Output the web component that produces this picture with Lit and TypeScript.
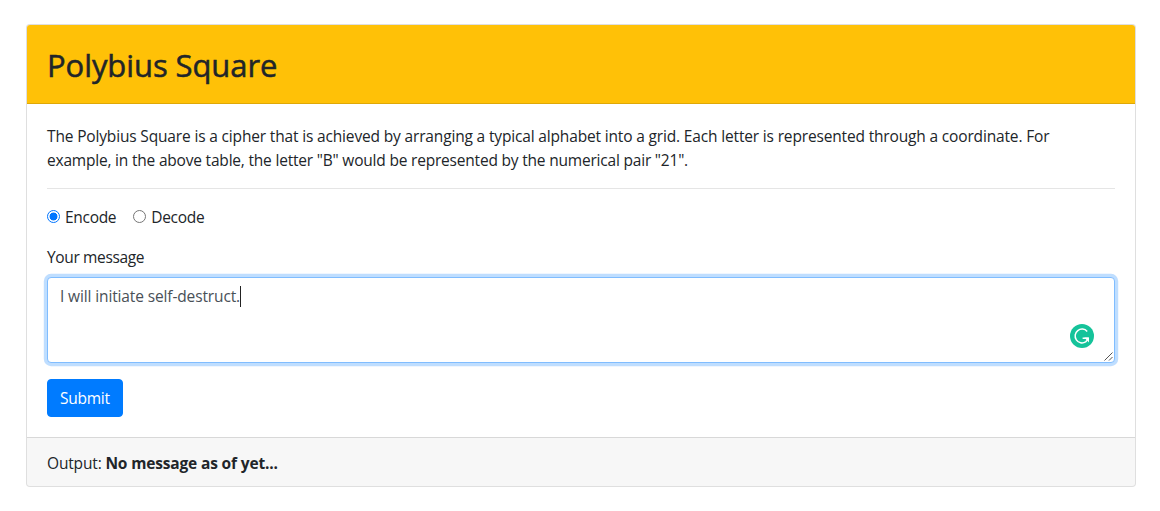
import { LitElement, html, css } from 'lit';
import { customElement, state } from 'lit/decorators.js';

@customElement('message-box')
export class MessageBox extends LitElement {
  static styles = css`
    :host {
      display: block;
    }

    .box {
      position: relative;
      box-sizing: border-box;
      height: 86px;
      padding: 6px 12px;
      border: 1px solid #80bdff;
      border-radius: 4px;
      background: #fff;
      box-shadow: 0 0 0 3.2px rgba(0, 123, 255, 0.25);
      color: #495057;
    }

    .line {
      display: flex;
      align-items: center;
      height: 24px;
      letter-spacing: -0.13px;
    }

    .caret {
      width: 1px;
      height: 21px;
      background: #222;
    }

    .badge {
      position: absolute;
      right: 20px;
      bottom: 14px;
      width: 24px;
      height: 24px;
    }

    .grip {
      position: absolute;
      right: 1px;
      bottom: 1px;
      width: 9px;
      height: 9px;
    }
  `;

  render() {
    return html`
      <div class="box">
        <div class="line"><span>I will initiate self-destruct.</span><span class="caret"></span></div>
        <svg class="badge" viewBox="0 0 24 24">
          <circle cx="12" cy="12" r="12" fill="#15c39a" />
          <path
            d="M17.2 7.4A6.9 6.9 0 1 0 15.6 17.9Q17.3 16.6 17.8 14.2H12.6"
            fill="none"
            stroke="#fff"
            stroke-width="1.5"
          />
          <path d="M14.2 13.5H19V18.4L17.4 16.7Z" fill="#fff" />
        </svg>
        <svg class="grip" viewBox="0 0 9 9">
          <path d="M0.5 8.5L8.5 0.5M5 8.5L8.5 5" stroke="#555" stroke-width="1" />
        </svg>
      </div>
    `;
  }
}

@customElement('app-root')
export class AppRoot extends LitElement {
  static styles = css`
    :host {
      display: block;
      padding: 24px 24px 0 26px;
      color: #212529;
      font-family: 'Open Sans', 'Noto Sans', sans-serif;
      font-size: 15.5px;
      line-height: 24px;
      letter-spacing: -0.16px;
    }

    .card {
      border: 1px solid rgba(0, 0, 0, 0.125);
      border-radius: 4px;
      background: #fff;
    }

    .header {
      padding: 21px 20px 19px;
      border-bottom: 1px solid rgba(0, 0, 0, 0.125);
      border-radius: 3px 3px 0 0;
      background: #ffc107;
    }

    h2 {
      margin: 0;
      font-size: 31px;
      font-weight: 500;
      line-height: 38.4px;
      letter-spacing: -0.08px;
      -webkit-text-stroke: 0.5px #212529;
    }

    .body {
      padding: 20px;
    }

    p {
      margin: 0;
    }

    .example {
      letter-spacing: -0.2px;
    }

    hr {
      margin: 16px 0;
      border: 0;
      border-top: 1px solid rgba(0, 0, 0, 0.1);
    }

    .modes {
      display: flex;
      gap: 17px;
      margin-bottom: 16px;
      letter-spacing: -0.3px;
    }

    .mode {
      display: flex;
      gap: 5px;
    }

    .radio {
      box-sizing: border-box;
      width: 13px;
      height: 13px;
      margin-top: 5px;
      border: 1px solid #767676;
      border-radius: 50%;
      background: #fff;
    }

    .radio.checked {
      border-color: #0075ff;
      background: radial-gradient(circle, #0075ff 3.6px, #fff 4.3px);
    }

    .label {
      margin-bottom: 8px;
      letter-spacing: -0.36px;
    }

    button {
      display: block;
      height: 38px;
      margin-top: 16px;
      padding: 6px 12px;
      border: 1px solid #007bff;
      border-radius: 4px;
      background: #007bff;
      color: #fff;
      font: inherit;
      letter-spacing: -0.25px;
    }

    .footer {
      padding: 13px 20px 11px;
      border-top: 1px solid rgba(0, 0, 0, 0.125);
      border-radius: 0 0 3px 3px;
      background: rgba(0, 0, 0, 0.03);
    }
  `;

  @state() private mode = 'Encode';

  private renderMode(name: string) {
    return html`
      <div class="mode" @click=${() => (this.mode = name)}>
        <span class="radio ${this.mode === name ? 'checked' : ''}"></span>
        <span>${name}</span>
      </div>
    `;
  }

  render() {
    return html`
      <div class="card">
        <div class="header"><h2>Polybius Square</h2></div>
        <div class="body">
          <p>
            The Polybius Square is a cipher that is achieved by arranging a typical alphabet into a
            grid. Each letter is represented through a coordinate. For<br />
            <span class="example">
              example, in the above table, the letter "B" would be represented by the numerical pair
              "21".
            </span>
          </p>
          <hr />
          <div class="modes">${['Encode', 'Decode'].map((name) => this.renderMode(name))}</div>
          <div class="label">Your message</div>
          <message-box></message-box>
          <button>Submit</button>
        </div>
        <div class="footer">Output: <b>No message as of yet...</b></div>
      </div>
    `;
  }
}
